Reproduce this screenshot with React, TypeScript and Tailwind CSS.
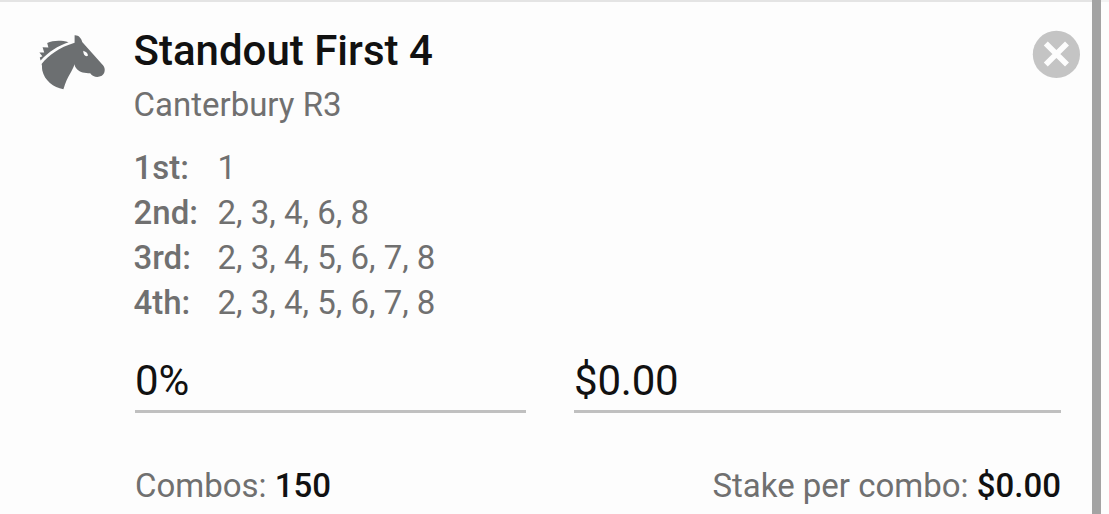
const selections = [
  { place: '1st:', runners: '1' },
  { place: '2nd:', runners: '2, 3, 4, 6, 8' },
  { place: '3rd:', runners: '2, 3, 4, 5, 6, 7, 8' },
  { place: '4th:', runners: '2, 3, 4, 5, 6, 7, 8' },
];

function HorseIcon() {
  return (
    <svg className="mt-[30px] h-[64px] w-[72px] shrink-0" viewBox="0 0 72 64" fill="#6c6f71" aria-hidden="true">
      <path d="M5.6 34C12.5 25.5 23 17.5 38.6 12.8V5.3C42.5 5 45.2 8 46.2 12L67.2 35.5C69.8 38.8 69 43.5 65.8 45.8C61.5 48 57 47 54.2 43.2C49 43 44 42.5 41 39.2C39.6 37.7 38.8 36.4 38.5 34.3C36.5 41.5 32 44.5 27.4 59.2C17.5 57.5 8.5 50.5 6.3 40.5C5.8 37.5 6.3 36 5.6 34ZM47.2 20.7C47.4 24.6 48.9 26.8 51.8 26C52.3 23.5 50.4 21.8 47.2 20.7Z" />
      <path d="M4.6 30.4L3.8 27.4L6.4 26.2L3.4 22.6L8.2 22.6L6.6 17.2L12.4 17.4L11.2 12.9C17 10.4 25 10 32.6 12.2C21.5 15.9 13 21.6 4.6 30.4Z" />
    </svg>
  );
}

export default function App() {
  return (
    <div className="flex h-[514px] w-[1109px] overflow-hidden bg-[#fdfdfd] font-['Roboto',sans-serif] text-[33px] leading-[45px] text-[#707070]">
      <div className="flex w-[1092px] shrink-0 border-t-2 border-[#e4e4e4] pl-9">
        <div className="-mt-0.5 flex w-full">
          <HorseIcon />
          <main className="ml-[25.5px] w-[927.5px] shrink-0 pt-[26px]">
            <h1 className="text-[42px] leading-[50px] font-medium text-[#111111]">Standout First 4</h1>
            <p className="mt-1.5">Canterbury R3</p>
            <dl className="mt-[18px]">
              {selections.map((row) => (
                <div key={row.place} className="flex">
                  <dt className="w-[84px] font-medium">{row.place}</dt>
                  <dd>{row.runners}</dd>
                </div>
              ))}
            </dl>
            <div className="mt-[31px] ml-[1.5px] flex gap-12 text-[42px] leading-[50px] tracking-[-0.2px] text-[#111111]">
              <div className="w-[391px] border-b-3 border-[#c0c0c0] pb-1">0%</div>
              <div className="flex-1 border-b-3 border-[#c0c0c0] pb-1">$0.00</div>
            </div>
            <div className="mt-[50px] ml-[1.5px] flex justify-between">
              <p>Combos: <span className="font-medium text-[#111111]">150</span></p>
              <p>Stake per combo: <span className="font-medium text-[#111111]">$0.00</span></p>
            </div>
          </main>
          <button aria-label="Remove bet" className="mt-[30px] -ml-7 size-12 shrink-0">
            <svg className="size-12 overflow-visible" viewBox="0 0 48 48">
              <circle cx="23.4" cy="24.4" r="23.6" fill="#c4c4c4" />
              <path d="M12.8 13.4L34 34.6M34 13.4L12.8 34.6" stroke="#fdfdfd" strokeWidth="5.6" />
            </svg>
          </button>
        </div>
      </div>
      <div className="w-[9px] shrink-0 bg-[#a3a3a3]" />
      <div className="flex-1 border-t-2 border-[#f2f2f2]" />
    </div>
  );
}
